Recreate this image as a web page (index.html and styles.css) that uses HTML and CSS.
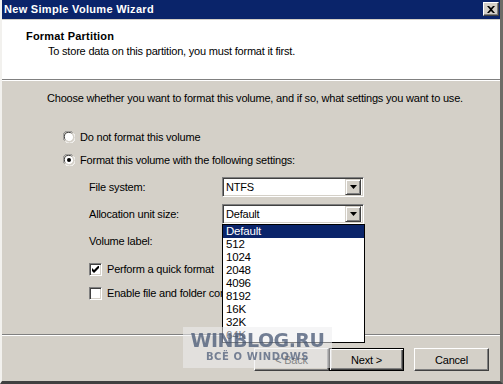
FILE: index.html
```html
<!DOCTYPE html>
<html>
<head>
<meta charset="utf-8">
<link rel="stylesheet" href="styles.css">
</head>
<body>
<div class="window">
  <div class="titlebar">
    <span class="title">New Simple Volume Wizard</span>
    <span class="close"><svg width="8" height="7" viewBox="0 0 8 7"><path d="M0 0h2l2 2 2-2h2L5 3.5 8 7H6L4 5 2 7H0l3-3.5z" fill="#000"/></svg></span>
  </div>
  <div class="header">
    <div class="h-title">Format Partition</div>
    <div class="h-sub">To store data on this partition, you must format it first.</div>
  </div>
  <div class="sep"></div>
  <div class="content">
    <p class="intro">Choose whether you want to format this volume, and if so, what settings you want to use.</p>
    <div class="radio-row first">
      <span class="radio"><svg width="12" height="12" viewBox="0 0 12 12"><path d="M1.5 9.5A5 5 0 0 1 9.5 1.5" stroke="#808080" fill="none"/><path d="M2.5 8.5A3.6 3.6 0 0 1 8.5 2.5" stroke="#404040" fill="none"/><circle cx="6" cy="6" r="4" fill="#fff"/><path d="M10.5 2.5A5 5 0 0 1 2.5 10.5" stroke="#fff" fill="none"/><path d="M9.5 3.5A3.6 3.6 0 0 1 3.5 9.5" stroke="#d4d0c8" fill="none"/></svg></span>
      <span>Do not format this volume</span>
    </div>
    <div class="radio-row second">
      <span class="radio"><svg width="12" height="12" viewBox="0 0 12 12"><path d="M1.5 9.5A5 5 0 0 1 9.5 1.5" stroke="#808080" fill="none"/><path d="M2.5 8.5A3.6 3.6 0 0 1 8.5 2.5" stroke="#404040" fill="none"/><circle cx="6" cy="6" r="4" fill="#fff"/><path d="M10.5 2.5A5 5 0 0 1 2.5 10.5" stroke="#fff" fill="none"/><path d="M9.5 3.5A3.6 3.6 0 0 1 3.5 9.5" stroke="#d4d0c8" fill="none"/><circle cx="6" cy="6" r="2" fill="#000"/></svg></span>
      <span>Format this volume with the following settings:</span>
    </div>
    <div class="settings">
      <div class="field">
        <span class="label">File system:</span>
        <div class="combo">
          <span class="combo-text">NTFS</span>
          <span class="combo-btn"><svg width="7" height="4" viewBox="0 0 7 4"><path d="M0 0h7L3.5 4z" fill="#000"/></svg></span>
        </div>
      </div>
      <div class="field">
        <span class="label">Allocation unit size:</span>
        <div class="combo">
          <span class="combo-text">Default</span>
          <span class="combo-btn"><svg width="7" height="4" viewBox="0 0 7 4"><path d="M0 0h7L3.5 4z" fill="#000"/></svg></span>
          <ul class="dropdown">
            <li class="selected">Default</li>
            <li>512</li>
            <li>1024</li>
            <li>2048</li>
            <li>4096</li>
            <li>8192</li>
            <li>16K</li>
            <li>32K</li>
            <li>64K</li>
          </ul>
        </div>
      </div>
      <div class="field">
        <span class="label">Volume label:</span>
      </div>
      <div class="check-row quick">
        <span class="check"><svg width="7" height="7" viewBox="0 0 7 7"><path d="M0 2v3l2 2 5-5V-1L2 4z" fill="#000"/></svg></span>
        <span>Perform a quick format</span>
      </div>
      <div class="check-row compress">
        <span class="check"></span>
        <span>Enable file and folder compression</span>
      </div>
    </div>
  </div>
  <div class="sep"></div>
  <div class="buttons">
    <span class="btn">&lt; Back</span>
    <span class="btn default">Next &gt;</span>
    <span class="btn cancel">Cancel</span>
  </div>
  <div class="watermark">
    <span class="wm-big">WINBLOG.RU</span>
    <span class="wm-small">ВСЁ О WINDOWS</span>
  </div>
</div>
</body>
</html>
```

FILE: styles.css
```css
* { box-sizing: border-box; }
html, body { margin: 0; padding: 0; }
body {
  width: 503px;
  height: 384px;
  overflow: hidden;
  font-family: "Liberation Sans", Arial, sans-serif;
  font-size: 11px;
  letter-spacing: -0.2px;
  color: #000;
}
.window {
  position: relative;
  width: 503px;
  height: 384px;
  display: flex;
  flex-direction: column;
  background: #d4d0c8;
  border-left: 2px solid #f2f1ee;
  border-right: 3px solid #6e6c68;
  border-bottom: 3px solid #404040;
}
.titlebar {
  height: 20px;
  flex: none;
  background: #0a246a;
  border-bottom: 1px solid #d4d0c8;
  display: flex;
  align-items: center;
  justify-content: space-between;
  padding: 0 1px 0 2px;
}
.title {
  color: #fff;
  font-weight: bold;
  font-size: 11px;
  line-height: 13px;
  letter-spacing: 0.3px;
  margin-top: -1px;
}
.close {
  width: 16px;
  height: 14px;
  background: #d4d0c8;
  border-top: 1px solid #fff;
  border-left: 1px solid #fff;
  border-right: 1px solid #404040;
  border-bottom: 1px solid #404040;
  box-shadow: inset -1px -1px 0 #808080;
  display: flex;
  align-items: center;
  justify-content: center;
  margin-top: -1px;
}
.header {
  height: 59px;
  flex: none;
  background: #fff;
  padding: 9px 0 0 24px;
}
.h-title {
  font-weight: bold;
  line-height: 14px;
  letter-spacing: 0.2px;
}
.h-sub {
  line-height: 13px;
  margin-top: 2px;
  padding-left: 22px;
}
.sep {
  height: 2px;
  flex: none;
  border-top: 1px solid #808080;
  border-bottom: 1px solid #fff;
}
.content {
  flex: 1;
  padding: 11px 0 0 45px;
  display: flex;
  flex-direction: column;
}
.intro {
  margin: 0;
  line-height: 13px;
}
.radio-row {
  display: flex;
  align-items: center;
  height: 12px;
  line-height: 12px;
  margin-left: 16px;
}
.radio-row.first { margin-top: 26px; }
.radio-row.second { margin-top: 11px; }
.radio {
  width: 12px;
  height: 12px;
  margin-right: 5px;
  display: flex;
}
.settings {
  margin-left: 42px;
  margin-top: 11px;
  display: flex;
  flex-direction: column;
}
.field {
  display: flex;
  align-items: center;
  height: 20px;
  margin-bottom: 7px;
}
.label {
  width: 133px;
  flex: none;
}
.combo {
  position: relative;
  width: 142px;
  height: 20px;
  background: #fff;
  border-top: 1px solid #808080;
  border-left: 1px solid #808080;
  border-right: 1px solid #fff;
  border-bottom: 1px solid #fff;
  box-shadow: inset 1px 1px 0 #404040, inset -1px -1px 0 #d4d0c8;
  display: flex;
  align-items: center;
  padding: 2px 2px 2px 3px;
}
.combo-text {
  flex: 1;
  line-height: 14px;
}
.combo-btn {
  width: 16px;
  height: 16px;
  background: #d4d0c8;
  border-top: 1px solid #d4d0c8;
  border-left: 1px solid #d4d0c8;
  border-right: 1px solid #404040;
  border-bottom: 1px solid #404040;
  box-shadow: inset 1px 1px 0 #fff, inset -1px -1px 0 #808080;
  display: flex;
  align-items: center;
  justify-content: center;
}
.dropdown {
  position: absolute;
  left: -1px;
  top: 19px;
  width: 143px;
  margin: 0;
  padding: 0;
  list-style: none;
  background: #fff;
  border: 1px solid #000;
  z-index: 2;
}
.dropdown li {
  height: 13px;
  line-height: 13px;
  padding-left: 3px;
  font-size: 11.5px;
}
.dropdown li.selected {
  background: #0a246a;
  color: #fff;
}
.check-row {
  display: flex;
  align-items: center;
  height: 13px;
  line-height: 13px;
  white-space: nowrap;
}
.check-row.quick { margin-top: 5px; }
.check-row.compress { margin-top: 11px; }
.check {
  width: 13px;
  height: 13px;
  margin-right: 5px;
  background: #fff;
  border-top: 1px solid #808080;
  border-left: 1px solid #808080;
  border-right: 1px solid #fff;
  border-bottom: 1px solid #fff;
  box-shadow: inset 1px 1px 0 #404040, inset -1px -1px 0 #d4d0c8;
  display: flex;
  align-items: center;
  justify-content: center;
  flex: none;
}
.buttons {
  height: 45px;
  flex: none;
  display: flex;
  align-items: flex-start;
  justify-content: flex-end;
  padding: 12px 11px 0 0;
}
.btn {
  width: 75px;
  height: 23px;
  display: flex;
  align-items: center;
  justify-content: center;
  background: #d4d0c8;
  border-top: 1px solid #fff;
  border-left: 1px solid #fff;
  border-right: 1px solid #404040;
  border-bottom: 1px solid #404040;
  box-shadow: inset -1px -1px 0 #808080;
}
.btn.default {
  border: 1px solid #000;
  box-shadow: inset 1px 1px 0 #fff, inset -1px -1px 0 #404040, inset -2px -2px 0 #808080;
}
.btn.cancel { margin-left: 10px; }
.watermark {
  position: absolute;
  left: 181px;
  top: 327px;
  width: 149px;
  height: 41px;
  background: rgba(236, 236, 238, 0.55);
  display: flex;
  flex-direction: column;
  align-items: center;
  padding-top: 3px;
  z-index: 3;
  filter: blur(0.6px);
}
.wm-big {
  font-family: "DejaVu Sans", sans-serif;
  font-weight: bold;
  font-size: 19px;
  line-height: 21px;
  color: rgba(70, 85, 115, 0.75);
  letter-spacing: -0.5px;
}
.wm-small {
  font-family: "DejaVu Sans", sans-serif;
  font-weight: bold;
  font-size: 10px;
  line-height: 12px;
  color: rgba(70, 85, 115, 0.7);
  letter-spacing: 0.6px;
}
```
